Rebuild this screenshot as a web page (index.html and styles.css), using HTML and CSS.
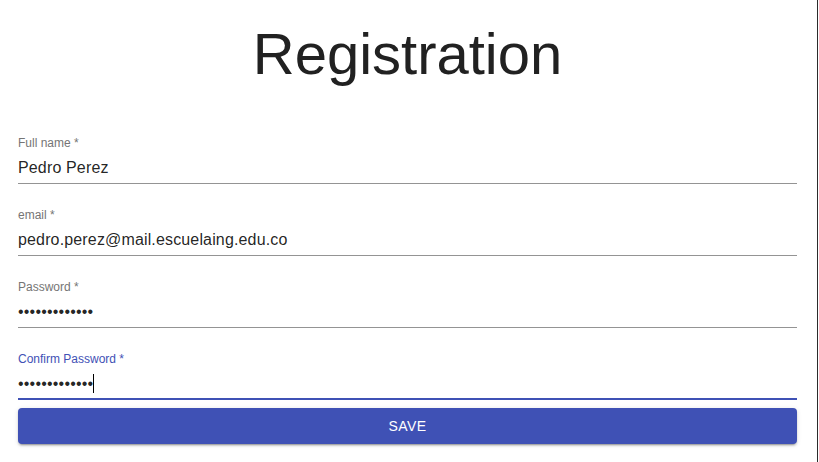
FILE: index.html
```html
<!DOCTYPE html>
<html lang="en">
<head>
<meta charset="utf-8">
<title>Registration</title>
<link rel="stylesheet" href="styles.css">
</head>
<body>
<div class="page">
  <h1 class="title">Registration</h1>
  <form class="form">
    <div class="field">
      <label class="label">Full name<span class="ast"> *</span></label>
      <div class="input"><span class="value">Pedro Perez</span></div>
    </div>
    <div class="field">
      <label class="label">email<span class="ast"> *</span></label>
      <div class="input"><span class="value">pedro.perez@mail.escuelaing.edu.co</span></div>
    </div>
    <div class="field">
      <label class="label">Password<span class="ast"> *</span></label>
      <div class="input"><span class="value dots">•••••••••••••</span></div>
    </div>
    <div class="field focused">
      <label class="label">Confirm Password<span class="ast"> *</span></label>
      <div class="input"><span class="value dots">•••••••••••••</span><span class="caret"></span></div>
    </div>
    <button type="button" class="save">Save</button>
  </form>
</div>
</body>
</html>
```
FILE: styles.css
```css
html, body {
  margin: 0;
  padding: 0;
  background: #fff;
}
body {
  font-family: "Liberation Sans", Arial, sans-serif;
  width: 819px;
  height: 462px;
  overflow: hidden;
}
.page {
  box-sizing: border-box;
  height: 462px;
  padding: 18px 20px 0 18px;
  border-right: 1px solid #2b2b2b;
  width: 818px;
}
.title {
  margin: 0;
  font-size: 58px;
  line-height: 72px;
  font-weight: 400;
  text-align: center;
  color: #212121;
}
.form {
  margin-top: 30px;
  display: flex;
  flex-direction: column;
}
.field {
  margin: 16px 0 8px;
}
.label {
  display: block;
  font-size: 12px;
  line-height: 12px;
  height: 16px;
  color: #757575;
  padding-top: 1px;
  box-sizing: border-box;
}
.input {
  box-sizing: border-box;
  height: 32px;
  padding: 6px 0 7px;
  border-bottom: 1px solid #949494;
  display: flex;
  align-items: center;
  font-size: 16px;
  line-height: 19px;
  color: rgba(0, 0, 0, 0.87);
}
.value {
  letter-spacing: 0.15px;
}
.dots {
  letter-spacing: 0.2px;
}
.focused .label {
  color: #3f51b5;
}
.focused .input {
  border-bottom: 2px solid #3f51b5;
  padding-bottom: 6px;
}
.caret {
  display: inline-block;
  width: 1px;
  height: 19px;
  background: #000;
}
.save {
  display: block;
  width: 100%;
  height: 36px;
  margin-top: 0;
  border: 0;
  border-radius: 4px;
  background: #3f51b5;
  color: #fff;
  font-family: "Liberation Sans", Arial, sans-serif;
  font-size: 14px;
  letter-spacing: 0.4px;
  text-transform: uppercase;
  box-shadow: 0 3px 1px -2px rgba(0,0,0,0.2), 0 2px 2px 0 rgba(0,0,0,0.14), 0 1px 5px 0 rgba(0,0,0,0.12);
}
```
